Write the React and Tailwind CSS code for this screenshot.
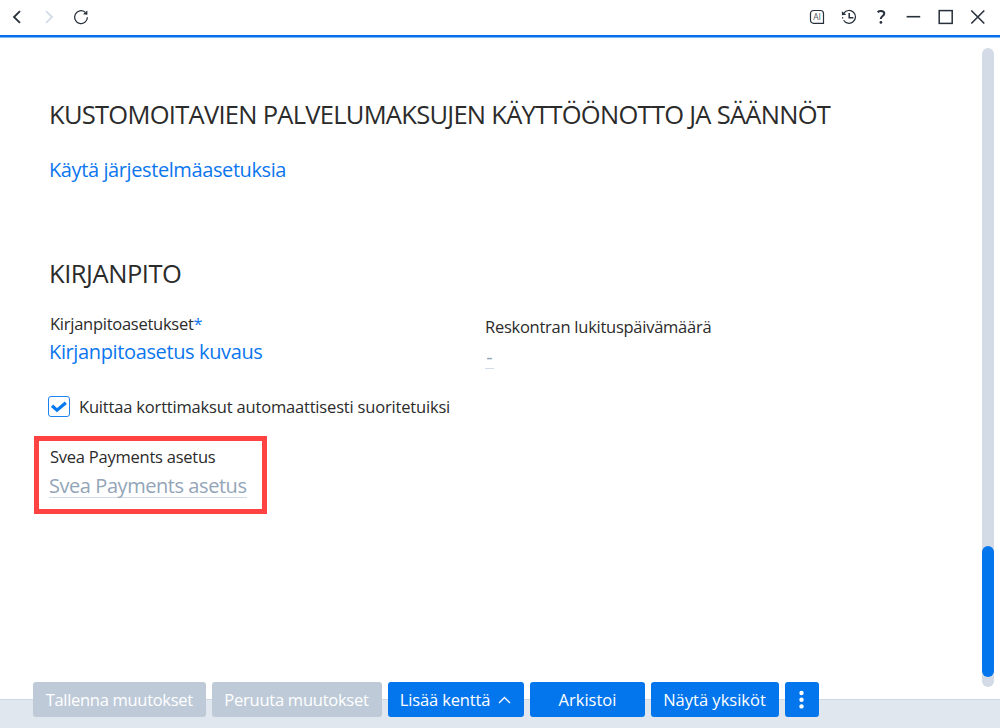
function IconButton({ label, className = "", children }) {
  return (
    <button aria-label={label} className={`flex h-8 w-8 items-center justify-center ${className}`}>
      {children}
    </button>
  );
}

function TitleBar() {
  return (
    <header className="flex h-[38px] shrink-0 flex-col bg-white text-[#27303b]">
      <div className="flex h-[35px] justify-between">
        <div className="flex pl-px pt-px">
          <IconButton label="Takaisin">
            <svg width="16" height="16" viewBox="0 0 16 16" fill="none" stroke="currentColor" strokeWidth="1.8">
              <path d="M11 2.2 5 8l6 5.8" />
            </svg>
          </IconButton>
          <IconButton label="Eteenpäin" className="text-[#d3dce6]">
            <svg width="16" height="16" viewBox="0 0 16 16" fill="none" stroke="currentColor" strokeWidth="1.8">
              <path d="m5 2.2 6 5.8-6 5.8" />
            </svg>
          </IconButton>
          <IconButton label="Päivitä">
            <svg width="16" height="16" viewBox="0 0 16 16" fill="none" stroke="currentColor" strokeWidth="1.25">
              <path d="M14.4 8.2A6.4 6.4 0 1 1 12.2 3.3" />
              <path d="M14.400 1.600v4.200l-4.400-.5z" fill="currentColor" stroke="none" />
            </svg>
          </IconButton>
        </div>
        <div className="flex pr-[7px] pt-px">
          <IconButton label="Tekoäly">
            <svg width="16" height="16" viewBox="0 0 16 16" fill="none" stroke="currentColor" strokeWidth="1.2">
              <path d="M4.500 1.500h7a3 3 0 0 1 3 3v9.800h-10a3 3 0 0 1-3-3V4.500a3 3 0 0 1 3-3z" />
              <text x="8.100" y="11" textAnchor="middle" fontFamily="Open Sans, sans-serif" fontSize="8.500" fill="#4b5561" stroke="none">AI</text>
            </svg>
          </IconButton>
          <IconButton label="Historia">
            <svg width="16" height="16" viewBox="0 0 16 16" fill="none" stroke="currentColor" strokeWidth="1.25">
              <path d="M2.900 4.100A6.400 6.400 0 1 1 2.600 11.200" />
              <path d="M8.200 4v4.800h4.200" strokeWidth="1.500" />
              <path d="M.900 2.300v3.900l4.400-.5z" fill="currentColor" stroke="none" />
              <path d="M1.600 8.200v1.400" />
            </svg>
          </IconButton>
          <IconButton label="Ohje">
            <svg width="16" height="16" viewBox="0 0 16 16" fill="none" stroke="currentColor" strokeWidth="2">
              <path d="M4.600 3.100c1-.8 2.100-1.200 3.300-1.200 2.100 0 3.400 1 3.400 2.600 0 2.400-3.400 2.600-3.400 5.100v.5" />
              <circle cx="7.900" cy="13.400" r="1.350" fill="currentColor" stroke="none" />
            </svg>
          </IconButton>
          <IconButton label="Pienennä">
            <svg width="16" height="16" viewBox="0 0 16 16" stroke="currentColor" strokeWidth="1.600">
              <path d="M1.600 7.700h13.600" />
            </svg>
          </IconButton>
          <IconButton label="Suurenna">
            <svg width="16" height="16" viewBox="0 0 16 16" fill="none" stroke="currentColor" strokeWidth="1.500">
              <rect x="2.200" y="1.600" width="13" height="12.800" />
            </svg>
          </IconButton>
          <IconButton label="Sulje">
            <svg width="16" height="16" viewBox="0 0 16 16" stroke="currentColor" strokeWidth="1.600">
              <path d="M2.300 1.500l13 13M15.300 1.500l-13 13" />
            </svg>
          </IconButton>
        </div>
      </div>
      <div className="h-[3px] border-b border-[#7db8f6] bg-[#066ff0]" />
    </header>
  );
}

function ActionButton({ className = "", children }) {
  return (
    <button className={`flex h-[35px] shrink-0 items-center justify-center whitespace-nowrap rounded-[3px] text-[16.5px] leading-6 text-white ${className}`}>
      {children}
    </button>
  );
}

export default function App() {
  return (
    <div className="flex h-[728px] w-[1000px] flex-col overflow-hidden bg-white font-['Open_Sans','Noto_Sans',sans-serif] text-[#2b2b2b]">
      <TitleBar />

      <div className="flex min-h-0 flex-1 justify-between">
        <main className="flex w-[960px] flex-col items-start whitespace-nowrap pl-[34px] pt-[58px]">
          <h1 className="ml-[15px] text-[25.5px] leading-9 tracking-[-0.72px]">
            KUSTOMOITAVIEN PALVELUMAKSUJEN KÄYTTÖÖNOTTO JA SÄÄNNÖT
          </h1>
          <a className="ml-[15px] mt-6 text-[20px] leading-7 tracking-[-0.4px] text-[#0b76ee]">Käytä järjestelmäasetuksia</a>

          <h2 className="ml-[15px] mt-[71px] text-[25.5px] leading-9 tracking-[-0.45px]">KIRJANPITO</h2>

          <div className="mt-[21px] flex">
            <div className="flex w-[436px] flex-col pl-[15px]">
              <label className="ml-[1px] text-[16.5px] leading-6 tracking-[-0.26px]">
                Kirjanpitoasetukset<span className="text-[#0b76ee]">*</span>
              </label>
              <a className="mt-[2px] text-[20px] leading-7 tracking-[-0.37px] text-[#0b76ee]">Kirjanpitoasetus kuvaus</a>
            </div>
            <div className="flex flex-col items-start pl-[15px] pt-[3px]">
              <label className="text-[16.5px] leading-6 tracking-[-0.26px]">Reskontran lukituspäivämäärä</label>
              <span className="mt-1.5 h-6 w-[9px] border-b border-[#cfdbe8] text-center text-[20px] leading-[24px] text-[#93a5b8]">-</span>
            </div>
          </div>

          <div className="ml-[14px] mt-[26px] flex h-6 items-center gap-[9px]">
            <span className="mb-px flex h-[21px] w-[22px] items-center justify-center rounded-[3px] border-[1.5px] border-[#1c82f0]">
              <svg width="18" height="16" viewBox="0 0 18 16" fill="none" stroke="#0579f2" strokeWidth="3.200">
                <path d="m2 6.800 5 4.400 8.800-7.400" />
              </svg>
            </span>
            <span className="text-[16.5px] leading-6 tracking-[-0.18px]">Kuittaa korttimaksut automaattisesti suoritetuiksi</span>
          </div>

          <section className="mt-[17px] flex h-[78px] w-[233px] flex-col items-start border-[5px] border-[#ff4343] pl-[10px] pt-1">
            <label className="ml-[1px] text-[16.5px] leading-6 tracking-[-0.24px]">Svea Payments asetus</label>
            <span className="mt-0.5 h-[27px] border-b border-[#cfdbe8] text-[20px] leading-[29px] tracking-[-0.44px] text-[#93a5b8]">Svea Payments asetus</span>
          </section>
        </main>

        <div className="mr-1.5 mt-[10px] flex h-[639px] w-3 flex-col justify-end rounded-full bg-[#d3dce6] pb-[10px]">
          <div className="h-[131px] rounded-full bg-[#0375ed]" />
        </div>
      </div>

      <footer className="flex h-[29px] shrink-0 items-start border-t border-[#ced8e2] bg-[#e0e7ee] pl-[33px]">
        <div className="-mt-[18px] flex gap-[6px]">
          <ActionButton className="w-[172.5px] bg-[#becad8] tracking-[-0.3px]">Tallenna muutokset</ActionButton>
          <ActionButton className="w-[170px] bg-[#becad8] tracking-[-0.25px]">Peruuta muutokset</ActionButton>
          <ActionButton className="w-[136px] gap-2 bg-[#0375ed] tracking-[-0.15px]">
            Lisää kenttä
            <svg width="13" height="8" viewBox="0 0 13 8" fill="none" stroke="currentColor" strokeWidth="1.400">
              <path d="m1 7 5.500-5.500L12 7" />
            </svg>
          </ActionButton>
          <ActionButton className="w-[115px] bg-[#0375ed] pl-px">Arkistoi</ActionButton>
          <ActionButton className="w-[128px] bg-[#0375ed]">Näytä yksiköt</ActionButton>
          <ActionButton className="w-[34.5px] bg-[#0375ed]">
            <svg width="5" height="20" viewBox="0 0 5 20" fill="currentColor">
              <circle cx="2.500" cy="3" r="2.200" />
              <circle cx="2.500" cy="9.700" r="2.200" />
              <circle cx="2.500" cy="16.400" r="2.200" />
            </svg>
          </ActionButton>
        </div>
      </footer>
    </div>
  );
}
